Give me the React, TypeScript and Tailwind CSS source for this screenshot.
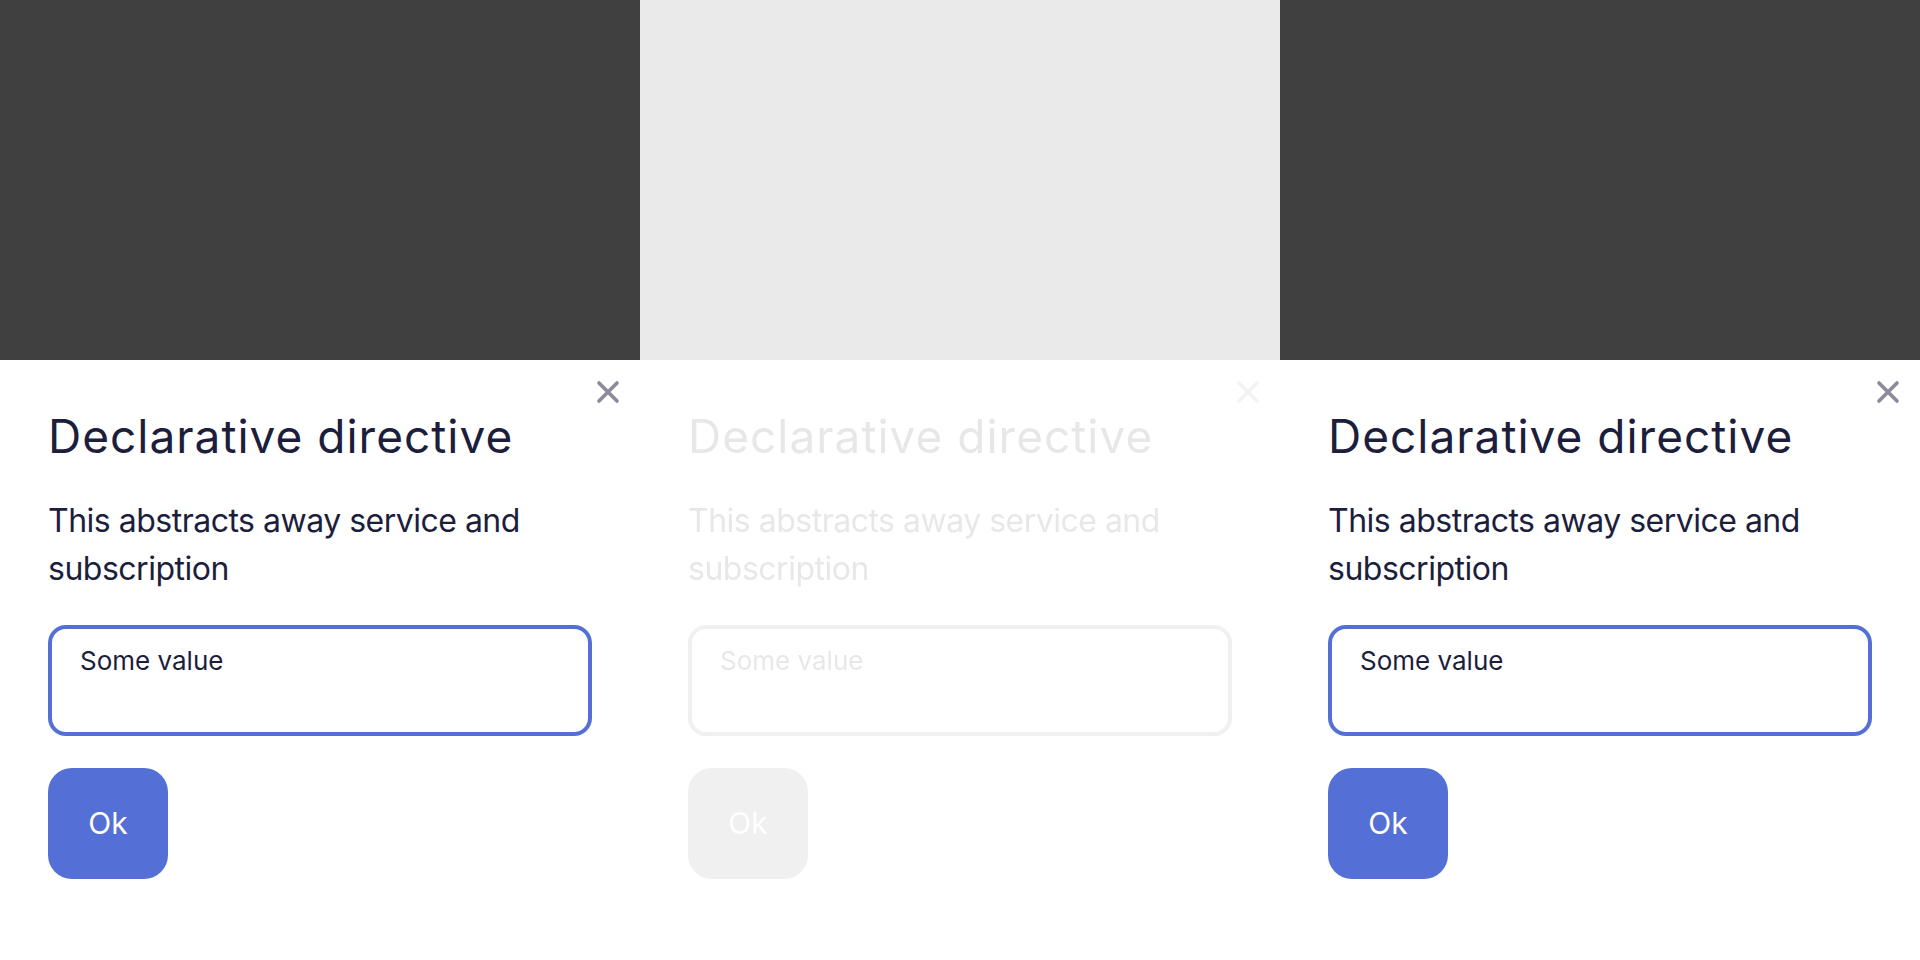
import { X } from "lucide-react";

// ─── Dialog preview ───────────────────────────────────────────────────────────

function DialogPanel({ faded }: { faded?: boolean }) {
  return (
    <div
      className={
        faded
          ? "flex flex-col h-full opacity-10 grayscale"
          : "flex flex-col h-full"
      }
    >
      <div className="h-[360px] shrink-0 bg-[#404040]" />
      <div className="relative flex-1 bg-white px-12 pt-[50px]">
        <button
          type="button"
          aria-label="Close"
          className="absolute right-[14px] top-[14px] flex h-9 w-9 items-center justify-center text-[#8a8a9a]"
        >
          <X size={36} strokeWidth={2.4} />
        </button>

        <h2 className="text-[46px] leading-[52px] font-normal tracking-[1px] text-[#1c1e3c]">
          Declarative directive
        </h2>

        <p className="mt-[35px] text-[32px] leading-[48px] tracking-[-0.5px] text-[#1c1e3c]">
          This abstracts away service and subscription
        </p>

        <textarea
          readOnly
          defaultValue="Some value"
          className="mt-[32px] block h-[111px] w-full resize-none rounded-[18px] border-4 border-[#5470d6] bg-white px-[28px] pt-[14px] text-[26px] leading-[36px] text-[#1c1e3c] outline-none"
        />

        <button
          type="button"
          className="mt-[32px] flex h-[111px] w-[120px] items-center justify-center rounded-[24px] bg-[#5470d6] text-[30px] text-white"
        >
          Ok
        </button>
      </div>
    </div>
  );
}

export default function App() {
  return (
    <div
      className="grid h-[960px] w-full grid-cols-3 overflow-hidden bg-white"
      style={{ fontFamily: "Inter, 'Noto Sans', sans-serif" }}
    >
      <DialogPanel />
      <DialogPanel faded />
      <DialogPanel />
    </div>
  );
}
